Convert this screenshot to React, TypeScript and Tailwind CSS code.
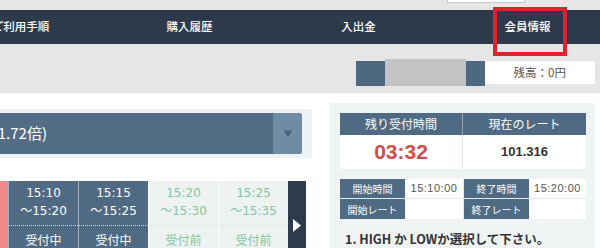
const jp = "font-['Noto_Sans_CJK_JP',sans-serif]";
const verdana = "font-['DejaVu_Sans','Noto_Sans_CJK_JP',sans-serif]";
const arial = "font-['Liberation_Sans','Noto_Sans_CJK_JP',sans-serif]";

const navItems = ["ご利用手順", "購入履歴", "入出金", "会員情報"];

const slots = [
  { from: "15:10", to: "～15:20", status: "受付中", open: true },
  { from: "15:15", to: "～15:25", status: "受付中", open: true },
  { from: "15:20", to: "～15:30", status: "受付前", open: false },
  { from: "15:25", to: "～15:35", status: "受付前", open: false },
];

function Slot({ from, to, status, open }: (typeof slots)[number]) {
  const tone = open
    ? "bg-[#4f6a82] text-white border-[#9fb0bf]"
    : "bg-[#eef2f1] text-[#7fc6a6] border-white";
  return (
    <div className={`flex w-[70px] flex-col border-l ${tone}`}>
      <div className={`flex flex-col items-center pt-[3px] pb-[5px] text-[12px] leading-[18px] ${verdana}`}>
        <span>{from}</span>
        <span>{to}</span>
      </div>
      <div
        className={`border-t border-dotted pt-[5px] text-center text-[12px] leading-[18px] ${jp} ${
          open ? "border-[#c9d3dc]" : "border-[#d6dedc]"
        }`}
      >
        {status}
      </div>
    </div>
  );
}

function InfoRow({ a, av, b, bv }: { a: string; av: string; b: string; bv: string }) {
  return (
    <div className="flex h-[20px] border-b border-[#e3e8ea] last:border-b-0">
      <div className={`flex w-[65px] items-center justify-center bg-[#4f6a83] text-[10px] text-white ${jp}`}>{a}</div>
      <div className={`flex w-[58px] items-center justify-center bg-white text-[11px] tracking-[0.5px] text-[#555] ${arial}`}>{av}</div>
      <div className={`flex w-[66px] items-center justify-center border-l border-[#e3e8ea] bg-[#4f6a83] text-[10px] text-white ${jp}`}>{b}</div>
      <div className={`flex w-[57px] items-center justify-center bg-white text-[11px] tracking-[0.5px] text-[#555] ${arial}`}>{bv}</div>
    </div>
  );
}

export default function App() {
  return (
    <div className={`relative h-[248px] w-[600px] overflow-hidden bg-white ${jp}`}>
      {/* top strip */}
      <div className="h-[10px] bg-[#e6e6e6]">
        <div className="ml-[447px] h-[3px] w-[78px] border-x border-b border-[#c8c8c8] bg-white" />
      </div>

      {/* nav */}
      <nav className="flex h-[34px] items-center bg-[#2d3a4c]">
        <div className="ml-[-64px] flex">
          {navItems.map((item) => (
            <span
              key={item}
              className="w-[169px] shrink-0 text-center text-[11.5px] font-medium text-white"
            >
              {item}
            </span>
          ))}
        </div>
      </nav>

      {/* balance bar */}
      <div className="flex h-[49px] bg-[#e6e6e6] pt-[17px] pl-[356px]">
        <div className="flex h-[25px] items-start bg-[#4e6881] pl-[29px] pr-[19px] pt-0">
          <div className="-mt-[2px] h-[27px] w-[81px] bg-[#c3c3c3]" />
        </div>
        <div className="flex h-[23px] w-[110px] items-center justify-end bg-white pr-[29px] text-[11.5px] text-[#555]">
          残高：0円
        </div>
      </div>

      {/* main */}
      <div className="flex">
        <div className="w-[312px] shrink-0 pt-[16px]">
          <div className="bg-[#eef2f4] py-[4px] pr-[10px]">
            <div className="flex h-[41px]">
              <div className="flex flex-1 items-center overflow-hidden bg-[#526d85] pb-[1px] text-[15px] text-white">
                <span className="-ml-[34px] whitespace-nowrap">5分 (1.72倍)</span>
              </div>
              <div className="flex w-[29px] items-center justify-center rounded-r-[2px] bg-[#6f8ca5]">
                <svg width="10" height="8" viewBox="0 0 10 8">
                  <path d="M0.5 0.5H9.5L5 7.5Z" fill="#4a6480" />
                </svg>
              </div>
            </div>
          </div>

          <div className="mt-[23px] flex h-[88px]">
            <div className="w-[8px] bg-[#f28a8a]" />
            {slots.map((s) => (
              <Slot key={s.from} {...s} />
            ))}
            <div className="flex w-[18px] items-center justify-center bg-[#2e3b4d]">
              <svg width="8" height="13" viewBox="0 0 8 13">
                <path d="M0 0L8 6.5L0 13Z" fill="#fff" />
              </svg>
            </div>
          </div>
        </div>

        <div className="ml-[18px] mt-[10px] w-[265px] bg-[#f0f3f4] pl-[10px] pt-[10px]">
          <div className="w-[246px]">
            <div className="flex h-[22px] bg-[#4f6a83] text-[12px] text-white">
              <div className="flex w-[122px] items-center justify-center">残り受付時間</div>
              <div className="flex flex-1 items-center justify-center border-l border-[#93a6b7]">現在のレート</div>
            </div>
            <div className="flex h-[34px] bg-white">
              <div className={`flex w-[122px] items-center justify-center text-[21px] font-bold text-[#cf4f4c] ${arial}`}>
                03:32
              </div>
              <div className={`flex flex-1 items-center justify-center border-l border-[#e1e6e8] text-[13px] font-bold text-[#333] ${arial}`}>
                101.316
              </div>
            </div>

            <div className="mt-[10px]">
              <InfoRow a="開始時間" av="15:10:00" b="終了時間" bv="15:20:00" />
              <InfoRow a="開始レート" av="" b="終了レート" bv="" />
            </div>

            <p className="mt-[10px] pl-[5px] text-[12.5px] font-bold leading-[20px] text-[#333]">
              1. HIGH か LOWか選択して下さい。
            </p>
          </div>
        </div>
      </div>

      {/* highlight */}
      <div className="absolute left-[493px] top-[7px] h-[49px] w-[74px] border-[4px] border-[#e3202b]" />
    </div>
  );
}
